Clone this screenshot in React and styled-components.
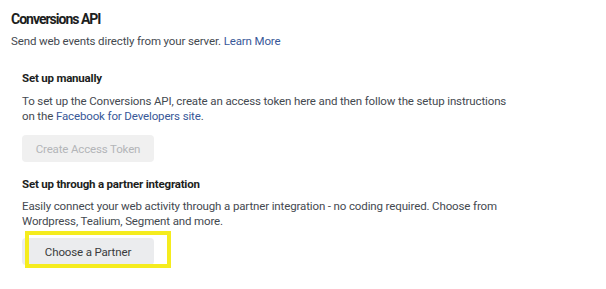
import styled, { createGlobalStyle } from "styled-components";

const GlobalStyle = createGlobalStyle`
  body {
    margin: 0;
    background: #ffffff;
    font-family: Roboto, "Liberation Sans", Arial, sans-serif;
    color: #444950;
  }
`;

const Page = styled.div`
  padding: 9px 11px;
`;

const Title = styled.h1`
  margin: 0;
  font-size: 14px;
  font-weight: 700;
  letter-spacing: -1px;
  color: #1c1e21;
  line-height: 20px;
`;

const Subtitle = styled.p`
  margin: 4px 0 0;
  font-size: 11.5px;
  letter-spacing: -0.13px;
  line-height: 16px;
`;

const Link = styled.a`
  color: #385898;
  text-decoration: none;
`;

const Section = styled.section`
  padding-left: 11px;
  margin-top: ${(p) => p.$top || 0}px;
`;

const SectionTitle = styled.h2`
  margin: 0;
  font-size: 11.5px;
  font-weight: 700;
  letter-spacing: -0.2px;
  color: #1c1e21;
  line-height: 16px;
`;

const Text = styled.p`
  margin: ${(p) => p.$top || 7}px 0 0;
  font-size: 11.5px;
  letter-spacing: -0.13px;
  line-height: 15px;
`;

const Button = styled.button`
  display: block;
  width: 132px;
  height: 27px;
  margin-top: ${(p) => p.$top || 10}px;
  border: none;
  border-radius: 4px;
  background: ${(p) => (p.disabled ? "#f0f0f0" : "#ebecee")};
  color: ${(p) => (p.disabled ? "#b3b5b8" : "#3a3b3c")};
  font-family: inherit;
  font-size: 11.5px;
  letter-spacing: -0.15px;
  cursor: ${(p) => (p.disabled ? "default" : "pointer")};
`;

const Highlighted = styled.div`
  position: relative;
  width: fit-content;
`;

const HighlightBox = styled.div`
  position: absolute;
  left: 3px;
  top: -7px;
  width: 146px;
  height: 37px;
  box-sizing: border-box;
  border: 4px solid #f5ec1e;
  pointer-events: none;
`;

export default function App() {
  return (
    <>
      <GlobalStyle />
      <Page>
        <Title>Conversions API</Title>
        <Subtitle>
          Send web events directly from your server. <Link href="#">Learn More</Link>
        </Subtitle>

        <Section $top={21}>
          <SectionTitle>Set up manually</SectionTitle>
          <Text $top={8}>
            To set up the Conversions API, create an access token here and then follow the setup instructions
            <br />
            on the <Link href="#">Facebook for Developers site</Link>.
          </Text>
          <Button disabled $top={11}>Create Access Token</Button>
        </Section>

        <Section $top={14}>
          <SectionTitle>Set up through a partner integration</SectionTitle>
          <Text $top={7}>
            Easily connect your web activity through a partner integration - no coding required. Choose from
            <br />
            Wordpress, Tealium, Segment and more.
          </Text>
          <Highlighted>
            <Button $top={9}>Choose a Partner</Button>
            <HighlightBox />
          </Highlighted>
        </Section>
      </Page>
    </>
  );
}
